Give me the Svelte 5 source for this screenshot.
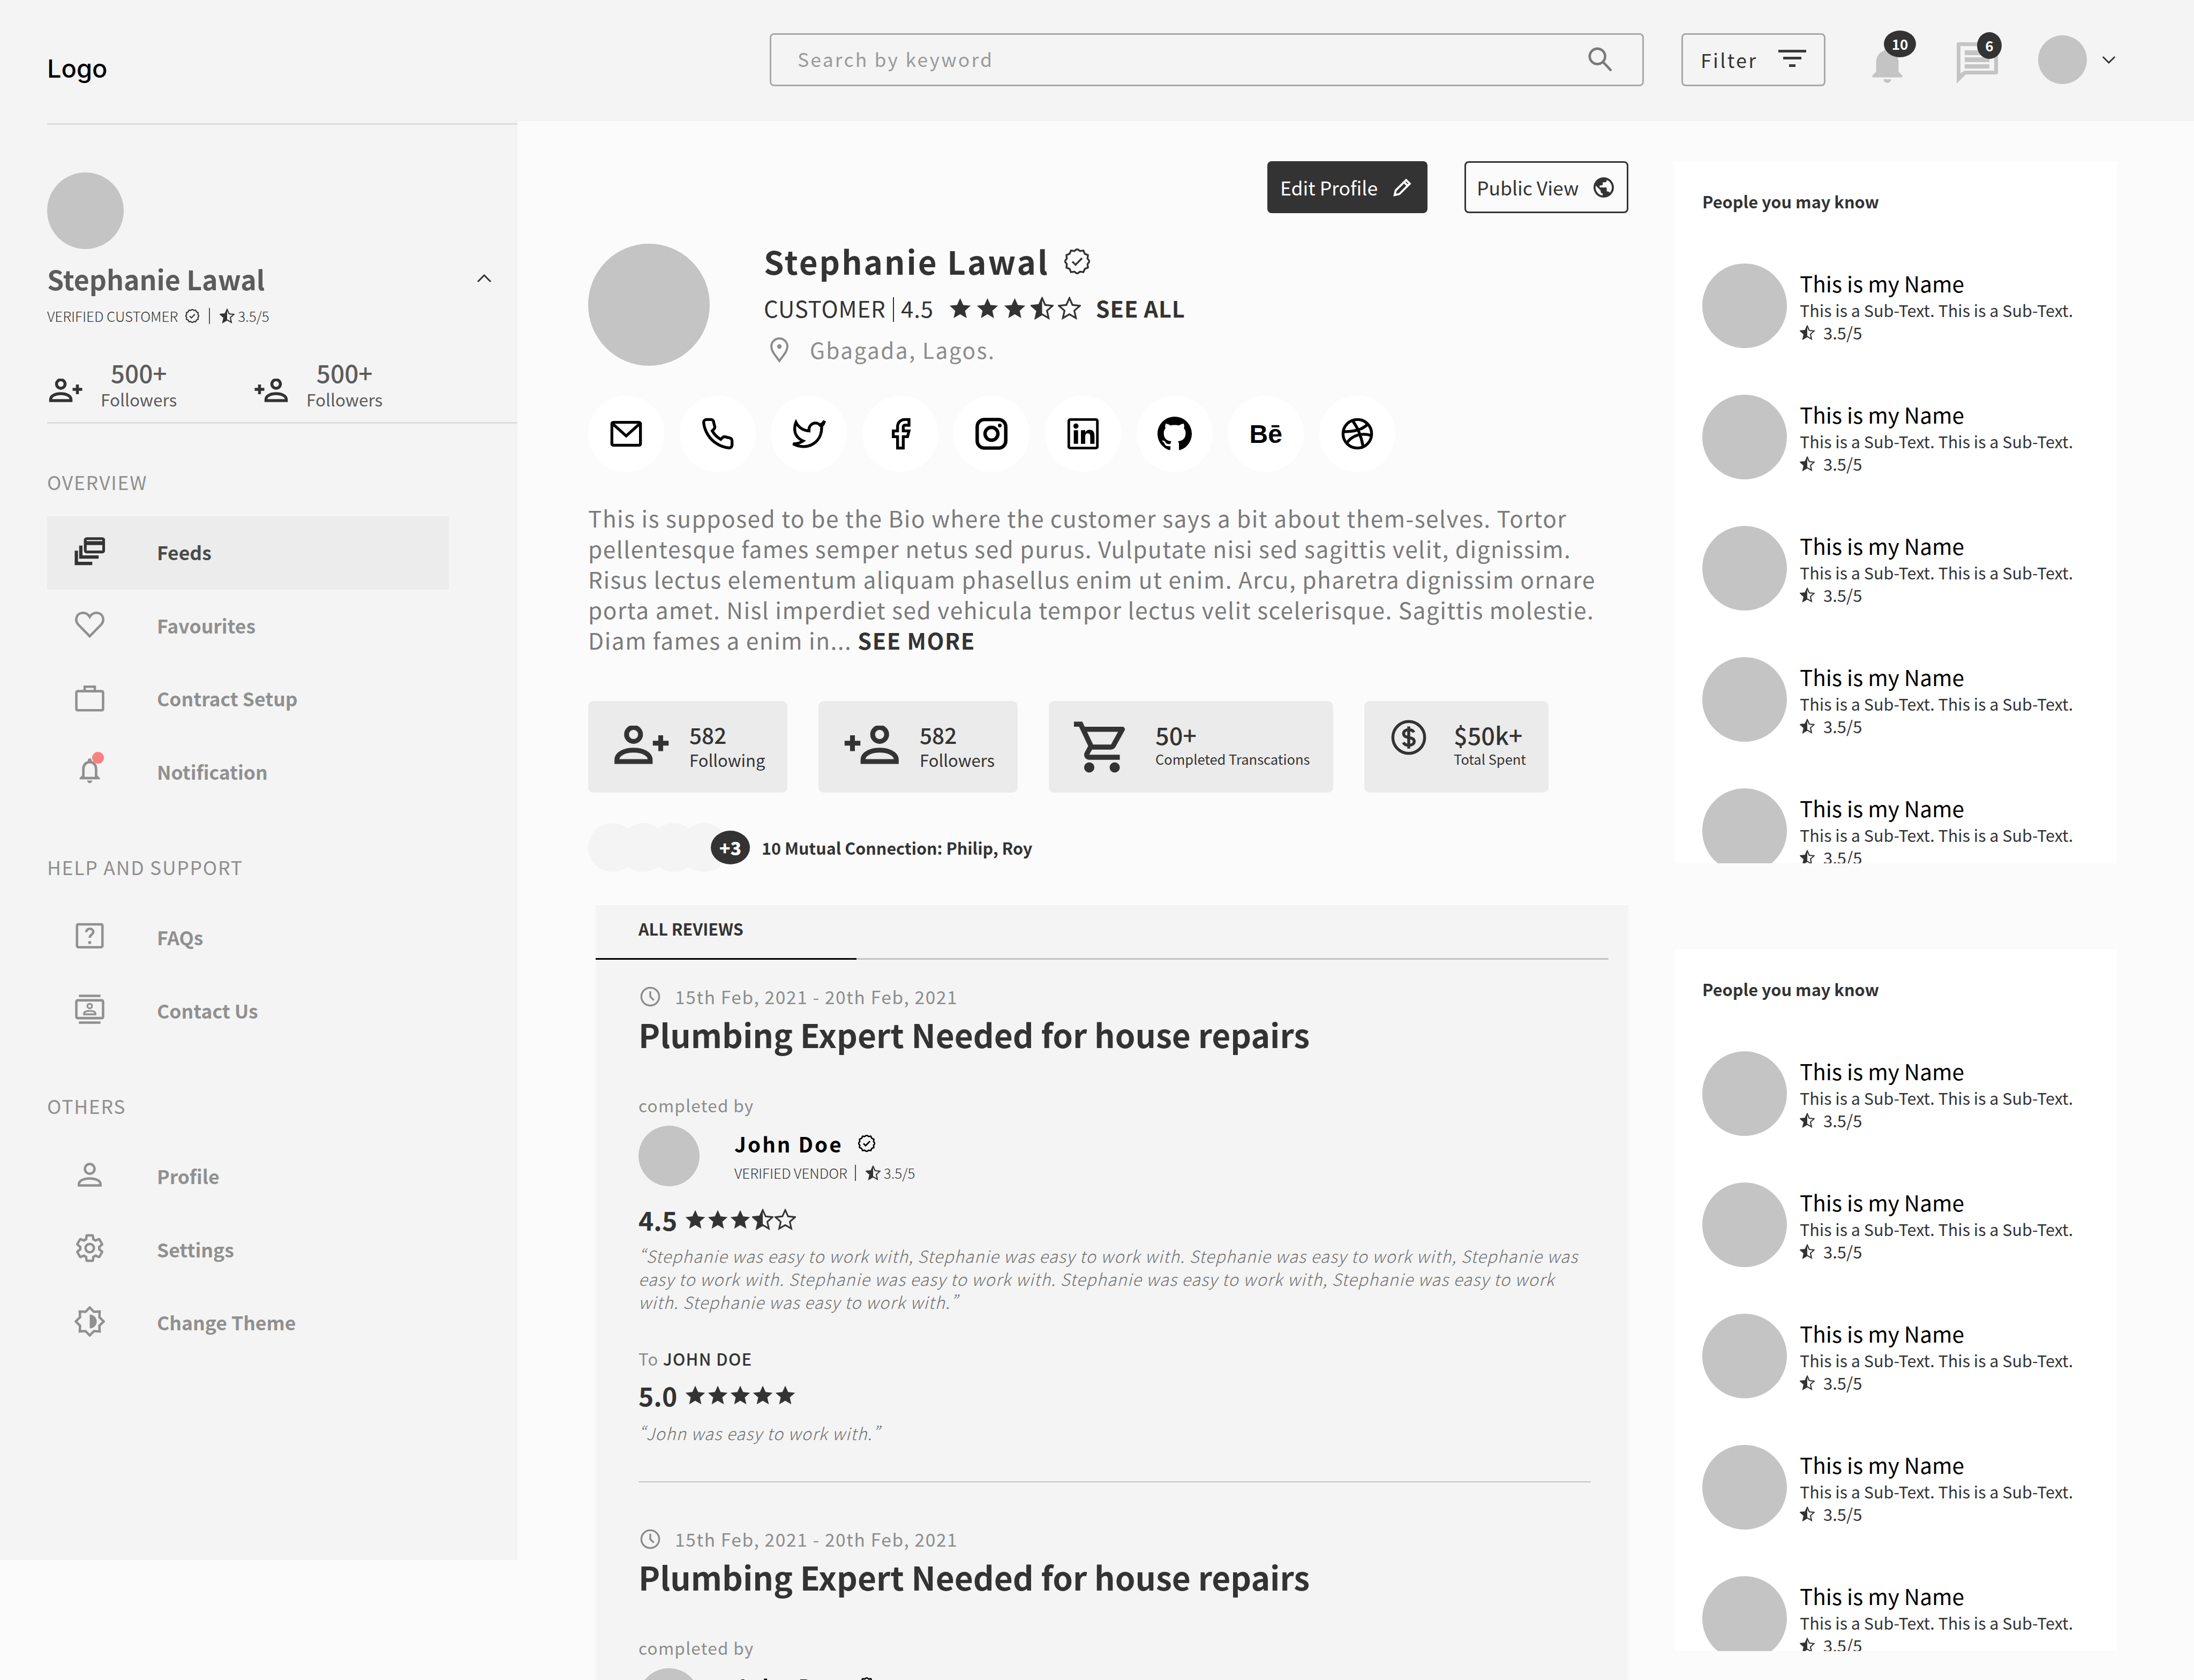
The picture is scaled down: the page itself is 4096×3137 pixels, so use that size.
<script>
  // 12-point scalloped badge outline for the "verified" mark
  const badge = Array.from({ length: 24 }, (_, i) => {
    const r = i % 2 ? 10 : 11.6
    const a = (i / 24) * Math.PI * 2
    return `${(12 + r * Math.sin(a)).toFixed(2)},${(12 - r * Math.cos(a)).toFixed(2)}`
  }).join(' ')

  const starPts = '12,1.5 15.2,8.6 23,9.4 17.1,14.6 18.8,22.3 12,18.3 5.2,22.3 6.9,14.6 1,9.4 8.8,8.6'
  const starHalf = '12,1.5 8.8,8.6 1,9.4 6.9,14.6 5.2,22.3 12,18.3'

  const overview = ['Feeds', 'Favourites', 'Contract Setup', 'Notification']
  const help = ['FAQs', 'Contact Us']
  const others = ['Profile', 'Settings', 'Change Theme']
  const socials = ['mail', 'phone', 'twitter', 'facebook', 'instagram', 'linkedin', 'github', 'behance', 'dribbble']
  const people = [1, 2, 3, 4, 5]
</script>

{#snippet star(kind)}
  <svg class="star" viewBox="0 0 24 24">
    {#if kind === 'full'}
      <polygon points={starPts} fill="currentColor" />
    {:else if kind === 'half'}
      <polygon points={starPts} fill="none" stroke="currentColor" stroke-width="1.8" />
      <polygon points={starHalf} fill="currentColor" />
    {:else}
      <polygon points={starPts} fill="none" stroke="currentColor" stroke-width="1.8" />
    {/if}
  </svg>
{/snippet}

{#snippet stars(list)}
  <span class="stars">
    {#each list as k}{@render star(k)}{/each}
  </span>
{/snippet}

{#snippet verified()}
  <svg class="verified" viewBox="0 0 24 24" fill="none" stroke="currentColor" stroke-width="2">
    <polygon points={badge} />
    <path d="M7.5 12.2l3 3 6-6.2" />
  </svg>
{/snippet}

{#snippet person(flip)}
  <svg class="person" viewBox="0 0 62 44" fill="none" stroke="currentColor" stroke-width="5.5">
    <g transform={flip ? 'translate(62 0) scale(-1 1)' : ''}>
      <circle cx="22" cy="10" r="8" />
      <path d="M3 41v-2c0-7 9-11 19-11s19 4 19 11v2z" />
      <path d="M44 20h18M53 11v18" />
    </g>
  </svg>
{/snippet}

{#snippet navIcon(name)}
  <svg class="nav-svg" viewBox="0 0 24 24" fill="none" stroke="currentColor" stroke-width="1.9">
    {#if name === 'Feeds'}
      <rect x="8.5" y="2" width="14.5" height="10.5" rx="1.2" stroke-width="2.2" />
      <path d="M9 4h14v3H9z" fill="currentColor" stroke="none" />
      <path d="M5 7.5V16.5h14M1.5 11.5V21.5H14" stroke-width="2.6" />
    {:else if name === 'Favourites'}
      <path d="M12 21.5 3 12.3C.2 9.3 1.2 4 5.6 3.2 8.3 2.7 10.7 4 12 6.3 13.3 4 15.7 2.7 18.4 3.2 22.8 4 23.8 9.3 21 12.3z" />
    {:else if name === 'Contract Setup'}
      <rect x="1.5" y="7" width="21" height="15" rx="1" />
      <path d="M8 7V3.5h8V7" />
    {:else if name === 'Notification'}
      <path d="M12 22c1.1 0 2-.9 2-2h-4c0 1.1.9 2 2 2zm6-6v-5c0-3.07-1.63-5.64-4.5-6.32V4c0-.83-.67-1.5-1.5-1.5s-1.5.67-1.5 1.5v.68C7.64 5.36 6 7.92 6 11v5l-2 2v1h16v-1l-2-2zm-2 1H8v-6c0-2.48 1.51-4.5 4-4.5s4 2.02 4 4.5v6z" fill="currentColor" stroke="none" />
    {:else if name === 'FAQs'}
      <rect x="2" y="2.5" width="20" height="18" rx="1" />
      <path d="M9.3 8.7c0-1.7 1.2-2.7 2.8-2.7s2.7 1 2.7 2.4c0 2.2-2.8 2.2-2.8 4.6" />
      <circle cx="12" cy="16.8" r="1.2" fill="currentColor" stroke="none" />
    {:else if name === 'Contact Us'}
      <rect x="1.5" y="5" width="21" height="14" rx="1" />
      <path d="M3.5 1.5h17M3.5 22.5h17" />
      <circle cx="12" cy="9.5" r="1.8" stroke-width="1.4" />
      <path d="M7.5 16v-.5c0-1.5 2-2.2 4.5-2.2s4.5.7 4.5 2.2v.5z" stroke-width="1.4" />
    {:else if name === 'Profile'}
      <circle cx="12" cy="7" r="3.8" />
      <path d="M3.5 20v-1c0-2.8 4-4.5 8.5-4.5s8.5 1.7 8.5 4.5v1z" />
    {:else if name === 'Settings'}
      <path d="M19.43 12.98c.04-.32.07-.64.07-.98s-.03-.66-.07-.98l2.11-1.65c.19-.15.24-.42.12-.64l-2-3.46c-.12-.22-.39-.3-.61-.22l-2.49 1c-.52-.4-1.08-.73-1.69-.98l-.38-2.65C14.46 2.18 14.25 2 14 2h-4c-.25 0-.46.18-.49.42l-.38 2.65c-.61.25-1.17.59-1.69.98l-2.49-1c-.23-.09-.49 0-.61.22l-2 3.46c-.13.22-.07.49.12.64l2.11 1.65c-.04.32-.07.65-.07.98s.03.66.07.98l-2.11 1.65c-.19.15-.24.42-.12.64l2 3.46c.12.22.39.3.61.22l2.49-1c.52.4 1.08.73 1.69.98l.38 2.65c.03.24.24.42.49.42h4c.25 0 .46-.18.49-.42l.38-2.65c.61-.25 1.17-.59 1.69-.98l2.49 1c.23.09.49 0 .61-.22l2-3.46c.12-.22.07-.49-.12-.64l-2.11-1.65z" />
      <circle cx="12" cy="12" r="3.3" />
    {:else if name === 'Change Theme'}
      <polygon points="12,1 15.3,4.4 19.8,4.2 19.6,8.7 23,12 19.6,15.3 19.8,19.8 15.3,19.6 12,23 8.7,19.6 4.2,19.8 4.4,15.3 1,12 4.4,8.7 4.2,4.2 8.7,4.4" />
      <path d="M12 6.5a5.5 5.5 0 0 1 0 11z" fill="currentColor" stroke="none" />
    {/if}
  </svg>
{/snippet}

{#snippet navRow(name, active)}
  <div class="nav-row" class:active>
    <span class="nav-icon">
      {@render navIcon(name)}
      {#if name === 'Notification'}<i class="dot"></i>{/if}
    </span>
    <span class="nav-text">{name}</span>
  </div>
{/snippet}

{#snippet social(name)}
  <span class="social">
    {#if name === 'behance'}
      <span class="be">Bē</span>
    {:else}
      <svg viewBox="0 0 24 24" fill="none" stroke="#000" stroke-width="2">
        {#if name === 'mail'}
          <rect x="2" y="4" width="20" height="16" rx="1" />
          <path d="M2.5 5 12 13.5 21.5 5" />
        {:else if name === 'phone'}
          <path d="M22 16.92v3a2 2 0 0 1-2.18 2 19.79 19.79 0 0 1-8.63-3.07 19.5 19.5 0 0 1-6-6 19.79 19.79 0 0 1-3.07-8.67A2 2 0 0 1 4.11 2h3a2 2 0 0 1 2 1.72c.13.96.36 1.9.7 2.81a2 2 0 0 1-.45 2.11L8.09 9.91a16 16 0 0 0 6 6l1.27-1.27a2 2 0 0 1 2.11-.45c.91.34 1.85.57 2.81.7A2 2 0 0 1 22 16.92z" />
        {:else if name === 'twitter'}
          <path d="M23 3a10.9 10.9 0 0 1-3 3 4.48 4.48 0 0 0-7.86 3v1A10.66 10.66 0 0 1 3 4s-4 9 5 13a11.64 11.64 0 0 1-7 2c9 5 20 0 20-11.5a4.5 4.5 0 0 0-.08-.83A7.72 7.72 0 0 0 23 3z" />
        {:else if name === 'facebook'}
          <path d="M18 2h-3a5 5 0 0 0-5 5v3H7v4h3v8h4v-8h3l1-4h-4V7a1 1 0 0 1 1-1h3z" />
        {:else if name === 'instagram'}
          <rect x="2" y="2" width="20" height="20" rx="5" stroke-width="2.4" />
          <circle cx="12" cy="12" r="4.5" stroke-width="2.4" />
          <circle cx="17.8" cy="6.2" r="1.3" fill="#000" stroke="none" />
        {:else if name === 'linkedin'}
          <rect x="2" y="2" width="20" height="20" rx="1" stroke-width="1.8" />
          <rect x="5.5" y="9.5" width="3" height="9.5" fill="#000" stroke="none" />
          <circle cx="7" cy="6.6" r="1.8" fill="#000" stroke="none" />
          <path d="M10.5 9.5h3v1.4c.6-1 1.7-1.7 3-1.7 2.6 0 3.5 1.7 3.5 4.3V19h-3v-5c0-1.3-.4-2.3-1.7-2.3s-1.8 1-1.8 2.3v5h-3z" fill="#000" stroke="none" />
        {:else if name === 'github'}
          <g transform="scale(1.5)">
            <path fill="#000" stroke="none" d="M8 0C3.58 0 0 3.58 0 8c0 3.54 2.29 6.53 5.47 7.59.4.07.55-.17.55-.38 0-.19-.01-.82-.01-1.49-2.01.37-2.53-.49-2.69-.94-.09-.23-.48-.94-.82-1.13-.28-.15-.68-.52-.01-.53.63-.01 1.08.58 1.23.82.72 1.21 1.87.87 2.33.66.07-.52.28-.87.51-1.07-1.78-.2-3.64-.89-3.64-3.95 0-.87.31-1.59.82-2.15-.08-.2-.36-1.02.08-2.12 0 0 .67-.21 2.2.82.64-.18 1.32-.27 2-.27.68 0 1.36.09 2 .27 1.53-1.04 2.2-.82 2.2-.82.44 1.1.16 1.92.08 2.12.51.56.82 1.27.82 2.15 0 3.07-1.87 3.75-3.65 3.95.29.25.54.73.54 1.48 0 1.07-.01 1.93-.01 2.2 0 .21.15.46.55.38A8.013 8.013 0 0016 8c0-4.42-3.58-8-8-8z" />
          </g>
        {:else if name === 'dribbble'}
          <circle cx="12" cy="12" r="10" />
          <path d="M8.5 2.6c3.3 4.4 6.3 10.8 7.5 18.5M2.2 10.5c6.5 0 13-.8 17.3-5.5M4.5 18.8c3-5 9.5-8 17.3-5.6" />
        {/if}
      </svg>
    {/if}
  </span>
{/snippet}

{#snippet review()}
  <section class="review">
    <div class="date">
      <svg class="clock" viewBox="0 0 24 24" fill="none" stroke="currentColor" stroke-width="2">
        <circle cx="12" cy="12" r="10" />
        <path d="M12 6v6l4 4" />
      </svg>
      <span>15th Feb, 2021 - 20th Feb, 2021</span>
    </div>
    <h2>Plumbing Expert Needed for house repairs</h2>
    <div class="completed">completed by</div>
    <div class="vendor">
      <span class="vendor-pic"></span>
      <div class="vendor-info">
        <div class="vendor-name">John Doe {@render verified()}</div>
        <div class="meta">
          VERIFIED VENDOR <i class="sep"></i> {@render star('half')} 3.5/5
        </div>
      </div>
    </div>
    <div class="rating"><b>4.5</b>{@render stars(['full', 'full', 'full', 'half', 'empty'])}</div>
    <p class="quote">“Stephanie was easy to work with, Stephanie was easy to work with. Stephanie was easy to work with, Stephanie was easy to work with. Stephanie was easy to work with. Stephanie was easy to work with, Stephanie was easy to work with. Stephanie was easy to work with.”</p>
    <div class="to">To <b>JOHN DOE</b></div>
    <div class="rating second"><b>5.0</b>{@render stars(['full', 'full', 'full', 'full', 'full'])}</div>
    <p class="quote short">“John was easy to work with.”</p>
    <hr />
  </section>
{/snippet}

{#snippet peoplePanel()}
  <div class="panel">
    <h3>People you may know</h3>
    {#each people as p}
      <div class="who">
        <span class="who-pic"></span>
        <div class="who-text">
          <div class="who-name">This is my Name</div>
          <div class="who-sub">This is a Sub-Text. This is a Sub-Text.</div>
          <div class="who-rate">{@render star('half')} 3.5/5</div>
        </div>
      </div>
    {/each}
  </div>
{/snippet}

<div class="page">
  <header>
    <div class="logo">Logo</div>
    <div class="search">
      <span>Search by keyword</span>
      <svg viewBox="0 0 24 24" fill="none" stroke="#7a7a7a" stroke-width="2.4">
        <circle cx="9.5" cy="9.5" r="7.5" />
        <path d="M15 15l8 8.5" />
      </svg>
    </div>
    <div class="filter">
      <span>Filter</span>
      <svg viewBox="0 0 52 36" fill="#3a3a3a">
        <rect x="0" y="0" width="52" height="5" />
        <rect x="9" y="13" width="34" height="5" />
        <rect x="20" y="27" width="12" height="5" />
      </svg>
    </div>
    <div class="bell">
      <svg viewBox="4 2.5 16 19.5" fill="#c4c4c4">
        <path d="M12 22c1.1 0 2-.9 2-2h-4c0 1.1.9 2 2 2zm6-6v-5c0-3.07-1.63-5.64-4.5-6.32V4c0-.83-.67-1.5-1.5-1.5s-1.5.67-1.5 1.5v.68C7.64 5.36 6 7.92 6 11v5l-2 2v1h16v-1l-2-2z" />
      </svg>
      <b class="badge wide">10</b>
    </div>
    <div class="chat">
      <svg viewBox="0 0 77 77" fill="#c4c4c4">
        <path d="M3 0h71a3 3 0 0 1 3 3v54a3 3 0 0 1-3 3H17L0 77V3a3 3 0 0 1 3-3zm4 7v51l8-5h55V7z" fill-rule="evenodd" />
        <rect x="15" y="15" width="46" height="9" />
        <rect x="15" y="28" width="46" height="9" />
        <rect x="15" y="41" width="46" height="8" />
      </svg>
      <b class="badge">6</b>
    </div>
    <span class="head-pic"></span>
    <svg class="head-chev" viewBox="0 0 28 16" fill="none" stroke="#333" stroke-width="3">
      <path d="M2 2l12 12L26 2" />
    </svg>
  </header>

  <div class="body">
    <aside class="side">
      <div class="rule top"></div>
      <span class="side-pic"></span>
      <div class="side-name">
        <span>Stephanie Lawal</span>
        <svg viewBox="0 0 28 16" fill="none" stroke="#333" stroke-width="3">
          <path d="M2 14 14 2l12 12" />
        </svg>
      </div>
      <div class="meta side-meta">
        VERIFIED CUSTOMER {@render verified()} <i class="sep"></i> {@render star('half')} 3.5/5
      </div>
      <div class="side-stats">
        <div class="side-stat">
          {@render person(false)}
          <div><strong>500+</strong><small>Followers</small></div>
        </div>
        <div class="side-stat">
          {@render person(true)}
          <div><strong>500+</strong><small>Followers</small></div>
        </div>
      </div>
      <div class="rule"></div>

      <div class="label first">OVERVIEW</div>
      <nav>
        {#each overview as name, i}{@render navRow(name, i === 0)}{/each}
      </nav>
      <div class="label">HELP AND SUPPORT</div>
      <nav>
        {#each help as name}{@render navRow(name, false)}{/each}
      </nav>
      <div class="label">OTHERS</div>
      <nav>
        {#each others as name}{@render navRow(name, false)}{/each}
      </nav>
    </aside>

    <main>
      <div class="actions">
        <button class="edit">
          Edit Profile
          <svg viewBox="0 0 24 24" fill="none" stroke="#fff" stroke-width="2.4">
            <path d="M3 21l1.2-5.5L16.5 3.2l4.3 4.3L8.5 19.8zM14 5.7l4.3 4.3" />
          </svg>
        </button>
        <button class="public">
          Public View
          <svg viewBox="2 2 20 20" fill="#333">
            <path d="M12 2C6.48 2 2 6.48 2 12s4.48 10 10 10 10-4.48 10-10S17.52 2 12 2zm-1 17.93c-3.95-.49-7-3.85-7-7.93 0-.62.08-1.21.21-1.79L9 15v1c0 1.1.9 2 2 2v1.93zm6.9-2.54c-.26-.81-1-1.39-1.9-1.39h-1v-3c0-.55-.45-1-1-1H8v-2h2c.55 0 1-.45 1-1V7h2c1.1 0 2-.9 2-2v-.41c2.93 1.19 5 4.06 5 7.41 0 2.08-.8 3.97-2.1 5.39z" />
          </svg>
        </button>
      </div>

      <div class="profile">
        <span class="profile-pic"></span>
        <div class="profile-text">
          <h1>Stephanie Lawal {@render verified()}</h1>
          <div class="cust">
            <span>CUSTOMER <i class="bar"></i> 4.5</span>
            {@render stars(['full', 'full', 'full', 'half', 'empty'])}
            <b>SEE ALL</b>
          </div>
          <div class="loc">
            <svg viewBox="0 0 24 32" fill="none" stroke="#8c8c8c" stroke-width="2.6">
              <path d="M12 30C7 23 2 18 2 12a10 10 0 0 1 20 0c0 6-5 11-10 18z" />
              <circle cx="12" cy="12" r="2.8" fill="#8c8c8c" stroke="none" />
            </svg>
            Gbagada, Lagos.
          </div>
        </div>
      </div>

      <div class="socials">
        {#each socials as s}{@render social(s)}{/each}
      </div>

      <p class="bio">
        This is supposed to be the Bio where the customer says a bit about them-selves. Tortor pellentesque fames semper netus sed purus. Vulputate nisi sed sagittis velit, dignissim. Risus lectus elementum aliquam phasellus enim ut enim. Arcu, pharetra dignissim ornare porta amet. Nisl imperdiet sed vehicula tempor lectus velit scelerisque. Sagittis molestie. Diam fames a enim in... <b>SEE MORE</b>
      </p>

      <div class="cards">
        <div class="card c1">
          {@render person(false)}
          <div><strong>582</strong><small>Following</small></div>
        </div>
        <div class="card c2">
          {@render person(true)}
          <div><strong>582</strong><small>Followers</small></div>
        </div>
        <div class="card c3">
          <svg class="cart" viewBox="1 2 20.2 20" fill="#333">
            <path d="M15.55 13c.75 0 1.41-.41 1.75-1.03l3.58-6.49c.37-.66-.11-1.48-.87-1.48H5.21l-.94-2H1v2h2l3.6 7.59-1.35 2.44C4.52 15.37 5.48 17 7 17h12v-2H7l1.1-2h7.45zM6.16 6h12.15l-2.76 5H8.53L6.16 6zM7 18c-1.1 0-1.99.9-1.99 2S5.9 22 7 22s2-.9 2-2-.9-2-2-2zm10 0c-1.1 0-1.99.9-1.99 2s.89 2 1.99 2 2-.9 2-2-.9-2-2-2z" />
          </svg>
          <div><strong>50+</strong><small class="tiny">Completed Transcations</small></div>
        </div>
        <div class="card c4">
          <svg class="dollar" viewBox="0 0 24 24" fill="none" stroke="#333" stroke-width="2">
            <circle cx="12" cy="12" r="10.8" />
            <path d="M15.5 8.5c-.6-1.2-2-1.8-3.5-1.8-2 0-3.5 1-3.5 2.7 0 3.8 7.2 1.5 7.2 5.3 0 1.7-1.7 2.6-3.7 2.6-1.6 0-3-.6-3.7-1.9M12 4.5v15" />
          </svg>
          <div><strong>$50k+</strong><small class="tiny">Total Spent</small></div>
        </div>
      </div>

      <div class="mutual">
        <div class="faces">
          <i></i><i></i><i></i><i></i>
          <b>+3</b>
        </div>
        <span>10 Mutual Connection: Philip, Roy</span>
      </div>

      <div class="reviews">
        <div class="tabs"><div class="tab">ALL REVIEWS</div></div>
        {@render review()}
        {@render review()}
      </div>
    </main>

    <div class="right">
      {@render peoplePanel()}
      {@render peoplePanel()}
    </div>
  </div>
</div>

<style>
  :global(body) {
    margin: 0;
    background: #fbfbfb;
  }
  .page {
    width: 4096px;
    height: 3137px;
    overflow: hidden;
    background: #fbfbfb;
    color: #333;
    font-family: "Noto Sans CJK SC", "Noto Sans", sans-serif;
    font-variant-east-asian: proportional-width;
  }
  svg {
    display: block;
    flex: none;
  }

  /* header */
  header {
    height: 226px;
    padding: 0 0 3px 88px;
    box-sizing: border-box;
    background: #f4f4f4;
    display: flex;
    align-items: center;
  }
  .logo {
    flex: 0 0 1349px;
    margin-top: 31px;
    font-family: Inter, sans-serif;
    font-weight: 500;
    font-size: 47px;
    color: #000;
  }
  .search {
    width: 1632px;
    height: 99px;
    box-sizing: border-box;
    border: 3px solid #a8a8a8;
    border-radius: 8px;
    padding: 0 56px 4px 49px;
    display: flex;
    align-items: center;
    justify-content: space-between;
    font-size: 35.5px;
    letter-spacing: 0.09em;
    color: #9a9a9a;
  }
  .search svg {
    width: 46px;
    height: 46px;
  }
  .filter {
    width: 269px;
    height: 99px;
    box-sizing: border-box;
    margin-left: 70px;
    border: 3px solid #a8a8a8;
    border-radius: 8px;
    padding: 0 33px 2px;
    display: flex;
    align-items: center;
    justify-content: space-between;
    font-size: 36px;
    letter-spacing: 0.09em;
  }
  .filter svg {
    width: 52px;
    height: 36px;
  }
  .bell,
  .chat {
    position: relative;
  }
  .bell {
    margin: 18px 0 0 85px;
  }
  .bell svg {
    width: 61px;
    height: 68px;
  }
  .chat {
    margin: 11px 0 0 99px;
  }
  .chat svg {
    width: 77px;
    height: 77px;
  }
  .badge {
    position: absolute;
    top: -19px;
    right: -7px;
    width: 46px;
    height: 50px;
    border-radius: 50%;
    background: #333;
    color: #fff;
    font-size: 26px;
    line-height: 50px;
    text-align: center;
  }
  .bell .badge {
    top: -30px;
    right: -23px;
  }
  .badge.wide {
    width: 60px;
  }
  .head-pic {
    width: 91px;
    height: 91px;
    margin-left: 75px;
    border-radius: 50%;
    background: #c4c4c4;
  }
  .head-chev {
    width: 26px;
    height: 15px;
    margin-left: 28px;
  }

  .body {
    display: flex;
    align-items: flex-start;
  }

  /* sidebar */
  .side {
    width: 966px;
    height: 2687px;
    flex: none;
    box-sizing: border-box;
    padding-top: 4px;
    background: #f4f4f4;
  }
  .rule {
    height: 3px;
    margin-left: 88px;
    background: #dcdcdc;
  }
  .side-pic {
    display: block;
    width: 143px;
    height: 143px;
    margin: 89px 0 0 88px;
    border-radius: 50%;
    background: #c4c4c4;
  }
  .side-name {
    height: 60px;
    margin: 25px 48px 0 88px;
    display: flex;
    align-items: center;
    justify-content: space-between;
    font-size: 50px;
    font-weight: 600;
    line-height: 60px;
    color: #5c5c5c;
  }
  .side-name svg {
    width: 28px;
    height: 16px;
  }
  .meta {
    display: flex;
    align-items: center;
    gap: 6px;
    font-size: 26px;
    font-weight: 300;
    line-height: 36px;
    color: #333;
  }
  .side-meta {
    margin: 22px 0 0 88px;
  }
  .verified {
    width: 26px;
    height: 26px;
    margin: 0 4px 0 8px;
  }
  .star {
    width: 28px;
    height: 28px;
  }
  .sep {
    width: 2px;
    height: 30px;
    margin: 0 12px 0 8px;
    background: #555;
  }
  .side-stats {
    margin: 58px 0 0 91px;
    display: flex;
  }
  .side-stat {
    width: 384px;
    display: flex;
    gap: 34px;
    align-items: flex-end;
    color: #333;
  }
  .side-stat .person {
    width: 63px;
    height: 44px;
    margin-bottom: 14px;
  }
  .side-stat strong,
  .side-stat small {
    display: block;
    text-align: center;
    color: #5c5c5c;
  }
  .side-stat strong {
    font-size: 46px;
    font-weight: 500;
    line-height: 59px;
  }
  .side-stat small {
    font-size: 31.5px;
    line-height: 40px;
  }
  .side-stats + .rule {
    margin-top: 23px;
  }
  .label {
    margin: 87px 0 42px 88px;
    font-size: 35.5px;
    line-height: 44px;
    letter-spacing: 0.05em;
    color: #8f8f8f;
  }
  .nav-row {
    width: 750px;
    height: 136.5px;
    margin-left: 88px;
    display: flex;
    align-items: center;
    font-size: 35.5px;
    font-weight: 600;
    color: #909090;
  }
  .nav-text {
    margin-top: -3px;
  }
  .nav-row.active {
    background: #ececec;
    color: #4a4a4a;
  }
  .nav-row.active .nav-icon {
    color: #333;
  }
  .nav-icon {
    position: relative;
    width: 57px;
    height: 57px;
    margin: -6px 97px 0 51px;
    color: #909090;
  }
  .nav-svg {
    width: 57px;
    height: 57px;
  }
  .dot {
    position: absolute;
    top: -6px;
    right: 2px;
    width: 22px;
    height: 22px;
    border-radius: 50%;
    background: #ff8080;
  }

  /* main column */
  main {
    width: 1942px;
    flex: none;
    margin-left: 132px;
    padding-top: 75px;
  }
  .actions {
    display: flex;
    justify-content: flex-end;
    gap: 69px;
  }
  button {
    height: 97px;
    box-sizing: border-box;
    display: flex;
    align-items: center;
    justify-content: space-between;
    border-radius: 8px;
    font-family: inherit;
    font-size: 35.5px;
  }
  button svg {
    width: 38px;
    height: 38px;
  }
  .edit {
    width: 299px;
    padding: 0 28px 0 24px;
    background: #333;
    border: 0;
    color: #fff;
  }
  .public {
    width: 306px;
    padding: 0 24px 0 20px;
    background: transparent;
    border: 3px solid #333;
    color: #333;
  }
  .profile {
    margin-top: 57px;
    display: flex;
  }
  .profile-pic {
    width: 227px;
    height: 228px;
    flex: none;
    border-radius: 50%;
    background: #c4c4c4;
  }
  .profile-text {
    margin-left: 101px;
  }
  h1 {
    margin: -4px 0 0;
    display: flex;
    align-items: center;
    gap: 28px;
    font-size: 60px;
    font-weight: 600;
    line-height: 72px;
    letter-spacing: 0.05em;
  }
  h1 .verified {
    width: 48px;
    height: 48px;
    margin: 2px 0 0;
    stroke-width: 1.7;
  }
  .cust {
    margin-top: 22px;
    display: flex;
    align-items: center;
    font-size: 42px;
    line-height: 60px;
    letter-spacing: 0.02em;
  }
  .bar {
    display: inline-block;
    width: 2px;
    height: 46px;
    margin: 0 3px;
    vertical-align: -8px;
    background: #333;
  }
  .cust .stars {
    margin-left: 28px;
    gap: 8px;
  }
  .cust .star {
    width: 43px;
    height: 43px;
  }
  .cust b {
    margin-left: 28px;
    font-size: 41.5px;
    font-weight: 600;
  }
  .stars {
    display: inline-flex;
    align-items: center;
    gap: 4px;
  }
  .loc {
    margin-top: 18px;
    display: flex;
    align-items: center;
    gap: 38px;
    font-size: 40.5px;
    line-height: 60px;
    letter-spacing: 0.06em;
    color: #8c8c8c;
  }
  .loc svg {
    width: 38px;
    height: 48px;
    margin-left: 10px;
  }
  .socials {
    margin-top: 56px;
    display: flex;
    gap: 28.6px;
  }
  .social {
    width: 142px;
    height: 142px;
    border-radius: 50%;
    background: #fff;
    display: flex;
    align-items: center;
    justify-content: center;
  }
  .social svg {
    width: 64px;
    height: 64px;
  }
  .be {
    font-family: "Liberation Sans", sans-serif;
    font-size: 48px;
    font-weight: 700;
    color: #000;
  }
  .bio {
    margin: 57px 0 0;
    font-size: 42.4px;
    line-height: 57px;
    letter-spacing: 0.035em;
    color: #7b7b7b;
  }
  .bio b {
    font-size: 41.5px;
    font-weight: 600;
    color: #333;
  }
  .cards {
    margin-top: 85px;
    display: flex;
    gap: 58px;
  }
  .card {
    height: 171px;
    box-sizing: border-box;
    border-radius: 10px;
    background: #ebebeb;
    display: flex;
  }
  .card strong,
  .card small {
    display: block;
  }
  .card strong {
    margin-top: 38px;
    font-size: 45px;
    font-weight: 500;
    line-height: 50px;
  }
  .c1 strong,
  .c2 strong {
    font-size: 40.5px;
  }
  .card small {
    font-size: 31px;
    line-height: 44px;
  }
  .card small.tiny {
    font-size: 25.5px;
    line-height: 40px;
  }
  .c1,
  .c2 {
    width: 372px;
    padding-left: 47px;
    gap: 37px;
  }
  .card .person {
    width: 105px;
    height: 72px;
    margin-top: 46px;
  }
  .c3 {
    width: 531px;
    padding-left: 47px;
    gap: 56px;
  }
  .cart {
    width: 96px;
    height: 96px;
    margin-top: 38px;
  }
  .c4 {
    width: 344px;
    padding-left: 50px;
    gap: 51px;
  }
  .dollar {
    width: 66px;
    height: 66px;
    margin-top: 35px;
  }
  .mutual {
    margin-top: 57px;
    display: flex;
    align-items: center;
    font-size: 30.5px;
    font-weight: 600;
  }
  .faces {
    position: relative;
    width: 302px;
    height: 91px;
    display: flex;
    margin-right: 22px;
  }
  .faces i {
    width: 91px;
    height: 91px;
    margin-right: -34px;
    flex: none;
    border-radius: 50%;
    background: #f4f4f4;
  }
  .faces b {
    position: absolute;
    left: 229px;
    top: 14px;
    width: 73px;
    height: 63px;
    border-radius: 50%;
    background: #333;
    color: #fff;
    font-size: 34px;
    line-height: 63px;
    text-align: center;
  }
  .reviews {
    width: 1928px;
    margin: 62px 0 0 14px;
    background: #f4f4f4;
    height: 1500px;
  }
  .tabs {
    width: 1891px;
    height: 102px;
    box-sizing: border-box;
    border-bottom: 3px solid #c4c4c4;
  }
  .tab {
    width: 487px;
    height: 102px;
    box-sizing: border-box;
    padding: 22px 0 0 80px;
    border-bottom: 3px solid #000;
    font-size: 30.5px;
    font-weight: 600;
    line-height: 44px;
  }
  .review {
    padding: 44px 0 0 80px;
    width: 1778px;
  }
  .date {
    display: flex;
    align-items: center;
    gap: 26px;
    font-size: 33.4px;
    line-height: 50px;
    letter-spacing: 0.05em;
    color: #8c8c8c;
  }
  .clock {
    width: 40px;
    height: 40px;
    margin-left: 2px;
  }
  h2 {
    margin: 5px 0 0;
    font-size: 60.4px;
    font-weight: 600;
    line-height: 80px;
  }
  .completed {
    margin-top: 70px;
    font-size: 31.5px;
    line-height: 44px;
    letter-spacing: 0.04em;
    color: #8c8c8c;
  }
  .vendor {
    margin-top: 17px;
    display: flex;
    gap: 65px;
  }
  .vendor-pic {
    width: 114px;
    height: 113px;
    flex: none;
    border-radius: 50%;
    background: #c4c4c4;
  }
  .vendor-info {
    padding-top: 8px;
  }
  .vendor-name {
    display: flex;
    align-items: center;
    gap: 20px;
    font-size: 38.5px;
    font-weight: 600;
    line-height: 50px;
    letter-spacing: 0.08em;
    color: #000;
  }
  .vendor-name .verified {
    width: 32px;
    height: 32px;
  }
  .vendor .meta {
    margin-top: 12px;
  }
  .rating {
    margin-top: 34px;
    display: flex;
    align-items: center;
    gap: 14px;
    line-height: 56px;
  }
  .rating b {
    font-size: 48px;
    font-weight: 700;
  }
  .rating .star {
    width: 40px;
    height: 40px;
  }
  .rating .stars {
    gap: 2px;
  }
  .rating.second {
    margin-top: 20px;
  }
  .quote {
    margin: 18px 0 0;
    font-size: 31px;
    font-style: italic;
    font-weight: 300;
    line-height: 43px;
    letter-spacing: 0.04em;
    color: #707070;
  }
  .quote.short {
    margin-top: 21px;
  }
  .to {
    margin-top: 65px;
    font-size: 31px;
    line-height: 40px;
    letter-spacing: 0.04em;
    color: #8c8c8c;
  }
  .to b {
    font-weight: 500;
    color: #333;
  }
  hr {
    margin: 69px 0 37px;
    height: 2px;
    border: 0;
    background: #c4c4c4;
  }

  /* right column */
  .right {
    width: 826px;
    margin: 75px 0 0 86px;
    flex: none;
    display: flex;
    flex-direction: column;
    gap: 160px;
  }
  .panel {
    height: 1311px;
    overflow: hidden;
    box-sizing: border-box;
    padding: 53px 52px 0;
    background: #fff;
  }
  h3 {
    margin: 0 0 94px;
    font-size: 30.7px;
    font-weight: 600;
    line-height: 44px;
  }
  .who {
    height: 158px;
    margin-bottom: 87px;
    display: flex;
    gap: 24px;
  }
  .who-pic {
    width: 158px;
    height: 158px;
    flex: none;
    border-radius: 50%;
    background: #c4c4c4;
  }
  .who-text {
    padding-top: 12px;
  }
  .who-name {
    font-size: 40.5px;
    line-height: 50px;
    color: #000;
  }
  .who-sub {
    margin-top: 5px;
    font-size: 30.5px;
    line-height: 40px;
    white-space: nowrap;
    color: #333;
  }
  .who-rate {
    margin-top: 2px;
    display: flex;
    align-items: center;
    gap: 16px;
    font-size: 31px;
    line-height: 40px;
    color: #333;
  }
</style>
